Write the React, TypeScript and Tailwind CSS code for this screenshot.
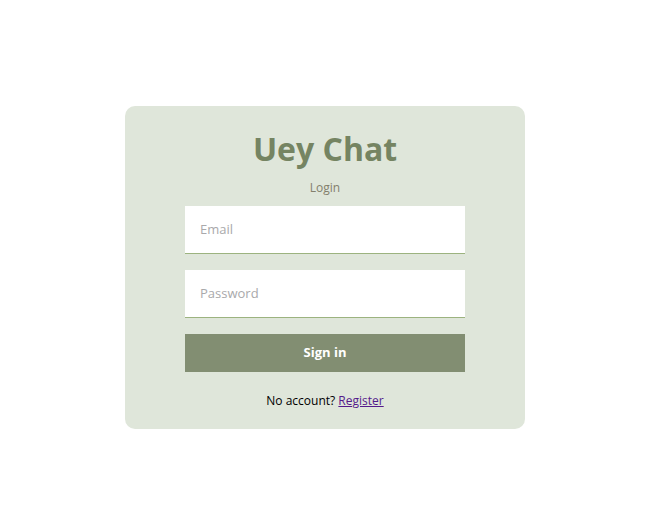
import React from "react";

function Field({ label }: { label: string }) {
  return (
    <div className="flex flex-col bg-white">
      <div className="h-[47px] flex items-center pt-[1px] px-[15px] text-[13px] text-[#a9a9ab]">{label}</div>
      <div className="h-[1px] bg-[#9cb37f]" />
    </div>
  );
}

export default function App() {
  return (
    <div className="w-[658px] h-[525px] bg-white flex pl-[125px]" style={{ fontFamily: '"Open Sans", sans-serif' }}>
      <div className="mt-[106px] w-[400px] h-[323px] rounded-[10px] bg-[#dfe6da] flex flex-col items-center pt-[21px]">
        <h1 className="text-[32px] font-bold leading-[44px] text-[#758462]">Uey Chat</h1>
        <div className="mt-[8px] text-[12px] leading-[17px] text-[#837f6c]">Login</div>
        <div className="mt-[10px] w-[280px] flex flex-col gap-[16px]">
          <Field label="Email" />
          <Field label="Password" />
          <div className="h-[38px] bg-[#828e72] flex items-center justify-center text-white text-[13px] font-bold">Sign in</div>
        </div>
        <div className="mt-[20px] text-[12px] leading-[17px] text-black">
          No account? <span className="underline text-[#551a8b]">Register</span>
        </div>
      </div>
    </div>
  );
}
